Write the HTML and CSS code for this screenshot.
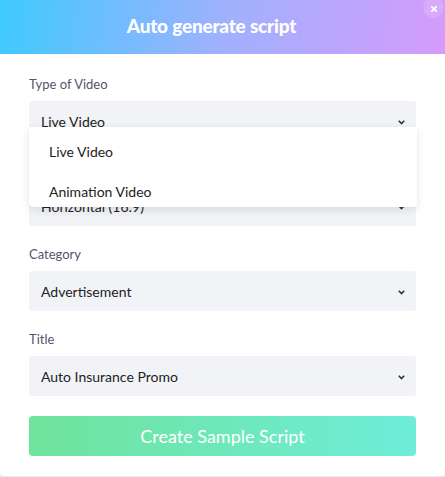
FILE: index.html
```html
<!DOCTYPE html>
<html>
<head>
<meta charset="utf-8">
<link rel="stylesheet" href="styles.css">
</head>
<body>
<div class="modal">
  <div class="header">
    <h1 class="title">Auto generate script</h1>
    <button class="close" aria-label="close">
      <svg width="6" height="6" viewBox="0 0 6 6"><path d="M0.8 0.8 L5.2 5.2 M5.2 0.8 L0.8 5.2" stroke="#fff" stroke-width="1.8" stroke-linecap="square"/></svg>
    </button>
  </div>
  <div class="body">
    <div class="field">
      <div class="label">Type of Video</div>
      <div class="select-wrap">
        <div class="select">
          <span>Live Video</span>
          <svg class="chev" width="7" height="5" viewBox="0 0 7 5"><path d="M0.8 0.8 L3.5 3.6 L6.2 0.8" fill="none" stroke="#333" stroke-width="1.6"/></svg>
        </div>
        <div class="menu">
          <div class="item">Live Video</div>
          <div class="item">Animation Video</div>
        </div>
      </div>
    </div>
    <div class="field">
      <div class="label">Orientation</div>
      <div class="select">
        <span>Horizontal (16:9)</span>
        <svg class="chev" width="7" height="5" viewBox="0 0 7 5"><path d="M0.8 0.8 L3.5 3.6 L6.2 0.8" fill="none" stroke="#333" stroke-width="1.6"/></svg>
      </div>
    </div>
    <div class="field">
      <div class="label">Category</div>
      <div class="select">
        <span>Advertisement</span>
        <svg class="chev" width="7" height="5" viewBox="0 0 7 5"><path d="M0.8 0.8 L3.5 3.6 L6.2 0.8" fill="none" stroke="#333" stroke-width="1.6"/></svg>
      </div>
    </div>
    <div class="field">
      <div class="label">Title</div>
      <div class="select">
        <span>Auto Insurance Promo</span>
        <svg class="chev" width="7" height="5" viewBox="0 0 7 5"><path d="M0.8 0.8 L3.5 3.6 L6.2 0.8" fill="none" stroke="#333" stroke-width="1.6"/></svg>
      </div>
    </div>
    <button class="create">Create Sample Script</button>
  </div>
</div>
</body>
</html>
```
FILE: styles.css
```css
* { box-sizing: border-box; }
html, body { margin: 0; padding: 0; background: #e9e9ee; }
body { width: 445px; height: 477px; overflow: hidden; font-family: "Lato", "Open Sans", sans-serif; }
.modal {
  width: 445px;
  height: 476px;
  background: #fff;
  border-radius: 0 0 4px 4px;
  overflow: hidden;
}
.header {
  position: relative;
  height: 54px;
  background: linear-gradient(100deg, #3ecafe 0%, #9fb1fd 50%, #d59bfc 100%);
  display: flex;
  align-items: center;
  justify-content: center;
  padding-right: 22px;
}
.title {
  margin: 0;
  color: #fff;
  font-size: 19px;
  font-weight: 900;
  letter-spacing: -0.2px;
  padding-bottom: 3px;
}
.close {
  position: absolute;
  right: 1px;
  top: -3px;
  width: 21px;
  height: 21px;
  border-radius: 50%;
  border: 0;
  background: rgba(255,255,255,0.15);
  display: flex;
  align-items: center;
  justify-content: center;
  padding: 0;
}
.close svg { margin-top: 3px; }
.body {
  padding: 22px 29px 0 29px;
  display: flex;
  flex-direction: column;
}
.field {
  display: flex;
  flex-direction: column;
  gap: 8px;
  margin-bottom: 20px;
}
.label {
  font-size: 13px;
  line-height: 17px;
  color: #56536b;
}
.select-wrap { position: relative; }
.select {
  height: 40px;
  background: #f2f3f7;
  border-radius: 3px;
  display: flex;
  align-items: center;
  justify-content: space-between;
  padding: 0 11px 0 12px;
  font-size: 14px;
  color: #222;
}
.chev { margin-top: 2px; }
.menu {
  position: absolute;
  left: 0;
  right: -1px;
  top: 26px;
  background: #fff;
  border-radius: 0 0 4px 4px;
  box-shadow: 0 3px 10px rgba(0,0,0,0.10), 0 0 2px rgba(0,0,0,0.05);
  z-index: 2;
}
.item {
  height: 40px;
  display: flex;
  align-items: center;
  padding: 8px 0 0 20px;
  font-size: 14px;
  color: #222;
}
.create {
  height: 40px;
  border: 0;
  border-radius: 4px;
  background: linear-gradient(90deg, #6ee39b 0%, #6eedd9 100%);
  color: #fff;
  font-family: "Lato", sans-serif;
  font-size: 18px;
  font-weight: 400;
  padding: 0;
}
```
